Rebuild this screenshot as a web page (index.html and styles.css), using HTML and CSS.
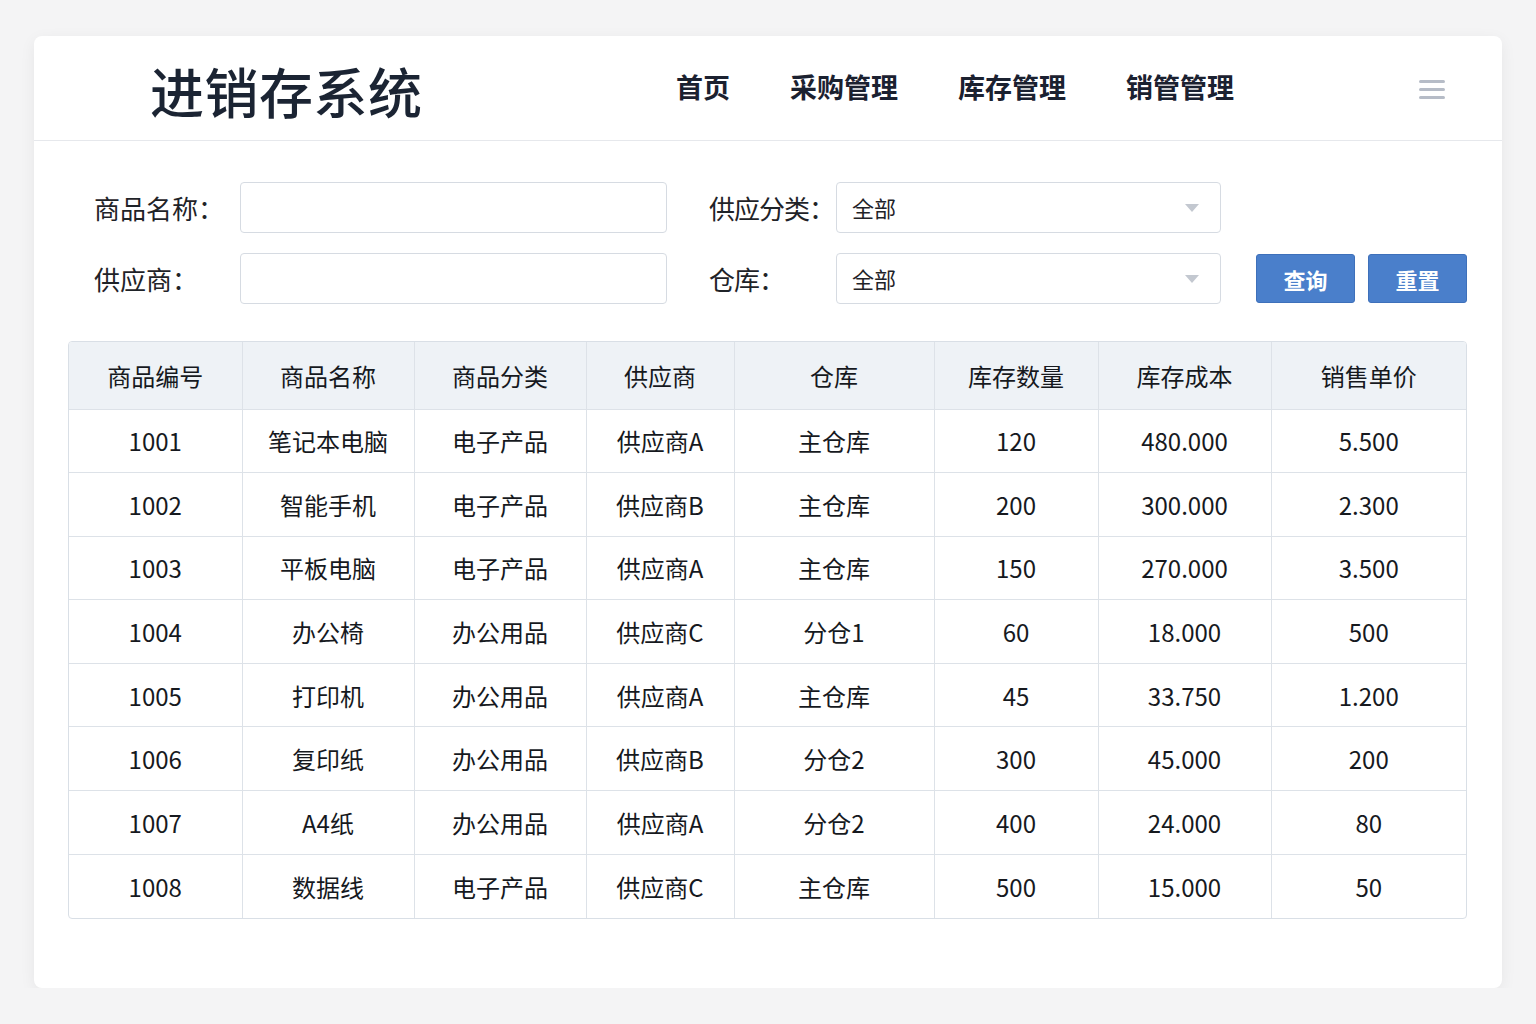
FILE: index.html
```html
<!DOCTYPE html>
<html lang="zh-CN">
<head>
  <meta charset="UTF-8">
  <meta name="viewport" content="width=device-width, initial-scale=1.0">
  <title>进销存系统</title>
  <link rel="stylesheet" href="styles.css">
</head>
<body>
  <div class="card">
    <!-- Header -->
    <header class="header">
      <h1 class="title">进销存系统</h1>
      <nav class="nav">
        <a href="#">首页</a>
        <a href="#">采购管理</a>
        <a href="#">库存管理</a>
        <a href="#">销管管理</a>
      </nav>
      <div class="menu-btn">
        <span></span><span></span><span></span>
      </div>
    </header>

    <!-- Search form -->
    <form class="filter">
      <div class="filter-row">
        <label class="label">商品名称：</label>
        <input class="field" type="text">
        <label class="label label-2">供应分类：</label>
        <div class="select">全部<span class="caret"></span></div>
      </div>
      <div class="filter-row">
        <label class="label">供应商：</label>
        <input class="field" type="text">
        <label class="label label-2">仓库：</label>
        <div class="select">全部<span class="caret"></span></div>
        <div class="actions">
          <button type="button" class="btn">查询</button>
          <button type="button" class="btn">重置</button>
        </div>
      </div>
    </form>

    <!-- Stock table -->
    <div class="table-wrap">
      <table class="stock">
        <colgroup>
          <col style="width:173px"><col style="width:172px"><col style="width:172px"><col style="width:148px">
          <col style="width:200px"><col style="width:164px"><col style="width:173px"><col>
        </colgroup>
        <thead>
          <tr>
            <th>商品编号</th><th>商品名称</th><th>商品分类</th><th>供应商</th>
            <th>仓库</th><th>库存数量</th><th>库存成本</th><th>销售单价</th>
          </tr>
        </thead>
        <tbody>
          <tr><td>1001</td><td>笔记本电脑</td><td>电子产品</td><td>供应商A</td><td>主仓库</td><td>120</td><td>480.000</td><td>5.500</td></tr>
          <tr><td>1002</td><td>智能手机</td><td>电子产品</td><td>供应商B</td><td>主仓库</td><td>200</td><td>300.000</td><td>2.300</td></tr>
          <tr><td>1003</td><td>平板电脑</td><td>电子产品</td><td>供应商A</td><td>主仓库</td><td>150</td><td>270.000</td><td>3.500</td></tr>
          <tr><td>1004</td><td>办公椅</td><td>办公用品</td><td>供应商C</td><td>分仓1</td><td>60</td><td>18.000</td><td>500</td></tr>
          <tr><td>1005</td><td>打印机</td><td>办公用品</td><td>供应商A</td><td>主仓库</td><td>45</td><td>33.750</td><td>1.200</td></tr>
          <tr><td>1006</td><td>复印纸</td><td>办公用品</td><td>供应商B</td><td>分仓2</td><td>300</td><td>45.000</td><td>200</td></tr>
          <tr><td>1007</td><td>A4纸</td><td>办公用品</td><td>供应商A</td><td>分仓2</td><td>400</td><td>24.000</td><td>80</td></tr>
          <tr><td>1008</td><td>数据线</td><td>电子产品</td><td>供应商C</td><td>主仓库</td><td>500</td><td>15.000</td><td>50</td></tr>
        </tbody>
      </table>
    </div>
  </div>
</body>
</html>
```

FILE: styles.css
```css
* {
  margin: 0;
  padding: 0;
  box-sizing: border-box;
  font-family: "Noto Sans CJK SC", "Noto Sans", sans-serif;
}

body {
  background-color: #f4f4f5;
  padding: 36px 34px 0 34px;
}

/* Card */
.card {
  width: 1468px;
  height: 952px;
  background-color: #ffffff;
  border-radius: 8px;
  box-shadow: 0 4px 16px rgba(0, 0, 0, 0.06);
}

/* Header */
.header {
  height: 105px;
  display: flex;
  align-items: center;
  padding: 0 57px 0 116px;
  border-bottom: 1px solid #e6e8ec;
}

.title {
  font-size: 54px;
  font-weight: 500;
  color: #1b2433;
  letter-spacing: 0.5px;
  margin-top: 4px;
}

.nav {
  display: flex;
  gap: 60px;
  margin-left: auto;
  margin-right: 185px;
  margin-top: -4px;
}

.nav a {
  font-size: 27px;
  font-weight: 700;
  color: #1b2130;
  text-decoration: none;
}

.menu-btn {
  display: flex;
  flex-direction: column;
  gap: 5px;
  width: 26px;
  margin-top: 2px;
}

.menu-btn span {
  display: block;
  height: 3px;
  border-radius: 2px;
  background-color: #b6bcc7;
}

/* Filter form */
.filter {
  padding: 41px 0 0 60px;
  display: flex;
  flex-direction: column;
  gap: 20px;
}

.filter-row {
  display: flex;
  align-items: center;
  height: 51px;
}

.label {
  width: 146px;
  font-size: 26px;
  color: #1f2328;
  white-space: nowrap;
}

.label-2 {
  width: 127px;
  margin-left: 42px;
  letter-spacing: -1px;
}

.field {
  width: 427px;
  height: 51px;
  border: 1px solid #d6dbe2;
  border-radius: 4px;
  background-color: #fff;
}

.select {
  position: relative;
  width: 385px;
  height: 51px;
  border: 1px solid #d6dbe2;
  border-radius: 4px;
  padding-left: 15px;
  font-size: 22px;
  line-height: 49px;
  color: #1f2328;
}

.caret {
  position: absolute;
  right: 21px;
  top: 21px;
  width: 0;
  height: 0;
  border-left: 7px solid transparent;
  border-right: 7px solid transparent;
  border-top: 8px solid #c3c8d0;
}

.actions {
  display: flex;
  gap: 13px;
  margin-left: 35px;
}

.btn {
  width: 99px;
  height: 49px;
  background-color: #4a7fcb;
  border: 1px solid #3e70ba;
  border-radius: 3px;
  color: #fff;
  font-size: 22px;
  font-weight: 700;
  cursor: pointer;
}

/* Table */
.table-wrap {
  margin: 37px 35px 0 34px;
  border: 1px solid #d9dfe6;
  border-radius: 4px;
  overflow: hidden;
}

.stock {
  width: 100%;
  border-collapse: collapse;
  table-layout: fixed;
}

.stock th,
.stock td {
  text-align: center;
  font-size: 24px;
  font-weight: 400;
  color: #16191e;
  border-right: 1px solid #dde2e8;
  border-bottom: 1px solid #dde2e8;
}

.stock th:last-child,
.stock td:last-child {
  border-right: none;
}

.stock tbody tr:last-child td {
  border-bottom: none;
}

.stock thead tr {
  height: 67px;
  background-color: #eef2f6;
}

.stock tbody tr {
  height: 63.6px;
}
```
